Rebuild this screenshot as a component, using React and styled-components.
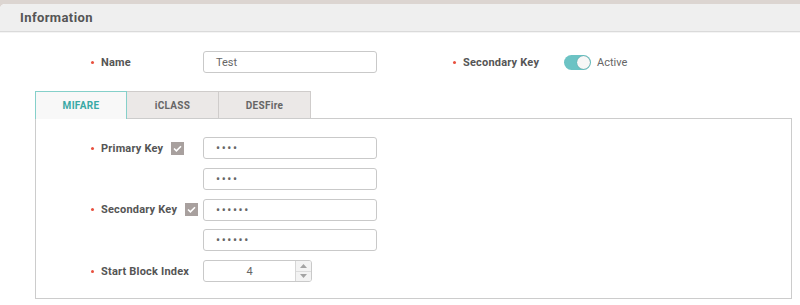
import React, { useState } from 'react';
import styled, { createGlobalStyle } from 'styled-components';

const GlobalStyle = createGlobalStyle`
  body {
    margin: 0;
    background: #dcd5d1;
    font-family: Roboto, "Liberation Sans", sans-serif;
  }
`;

const Page = styled.div`
  padding-top: 4px;
  width: 800px;
  height: 305px;
  box-sizing: border-box;
`;

const Card = styled.section`
  background: #fff;
  border-top-left-radius: 5px;
  height: 301px;
  overflow: hidden;
`;

const Header = styled.div`
  height: 27px;
  background: #efefef;
  border-bottom: 1px solid #dadada;
  box-shadow: 0 1px 0 #f4f4f4;
  padding-left: 20px;
  display: flex;
  align-items: center;
  font-size: 13px;
  font-weight: 700;
  letter-spacing: 0.4px;
  color: #555;
`;

const Body = styled.div`
  padding: 19px 8px 0 35px;
`;

const TopRow = styled.div`
  display: flex;
  align-items: center;
  height: 22px;
  padding-left: 56px;
`;

const Label = styled.div`
  display: flex;
  align-items: center;
  width: ${p => (p.$w ? `${p.$w}px` : '112px')};
  flex-shrink: 0;
  font-size: 11px;
  font-weight: 700;
  letter-spacing: 0.2px;
  color: #555;
  &::before {
    content: '';
    width: 3px;
    height: 3px;
    border-radius: 50%;
    background: #e8503e;
    margin-right: 7px;
  }
`;

const Input = styled.div`
  width: 174px;
  height: 22px;
  box-sizing: border-box;
  border: 1px solid #c9c9c9;
  border-radius: 3px;
  background: #fff;
  display: flex;
  align-items: center;
  padding-left: 12px;
  font-size: ${p => (p.$secret ? '12px' : '11px')};
  color: #666;
  letter-spacing: ${p => (p.$secret ? '1.6px' : '0')};
  flex-shrink: 0;
`;

const Gap = styled.div`
  width: 76px;
`;

const Toggle = styled.div`
  width: 27px;
  height: 15px;
  border-radius: 8px;
  background: ${p => (p.$on ? '#6cc3c4' : '#ccc')};
  position: relative;
  flex-shrink: 0;
  cursor: pointer;
  &::after {
    content: '';
    position: absolute;
    top: 1px;
    left: ${p => (p.$on ? '13px' : '1px')};
    width: 13px;
    height: 13px;
    border-radius: 50%;
    background: #f7f7f7;
    box-shadow: 0 0 1px rgba(0, 0, 0, 0.35);
  }
`;

const ToggleText = styled.span`
  margin-left: 6px;
  font-size: 11px;
  color: #666;
`;

const Tabs = styled.div`
  display: flex;
  margin-top: 18px;
  height: 27px;
`;

const Tab = styled.div`
  width: 92px;
  box-sizing: border-box;
  display: flex;
  align-items: center;
  justify-content: center;
  font-size: 10px;
  font-weight: 700;
  letter-spacing: 0.3px;
  color: ${p => (p.$active ? '#3aa9a6' : '#666')};
  background: ${p => (p.$active ? '#f8f8f8' : '#ebe8e7')};
  border: 1px solid ${p => (p.$active ? '#85d0ca' : '#cfcccb')};
  border-bottom: none;
  border-left-width: ${p => (p.$first ? '1px' : '0')};
  margin-bottom: ${p => (p.$active ? '-1px' : '0')};
  position: relative;
  z-index: ${p => (p.$active ? 1 : 0)};
  cursor: pointer;
`;

const Panel = styled.div`
  border: 1px solid #cccccc;
  height: 181px;
  box-sizing: border-box;
  padding: 18px 0 0 55px;
  display: flex;
  flex-direction: column;
  gap: 8.75px;
`;

const Row = styled.div`
  display: flex;
  align-items: center;
  height: 22px;
`;

const LabelCell = styled.div`
  width: 112px;
  flex-shrink: 0;
  display: flex;
  align-items: center;
`;

const Check = styled.span`
  width: 13px;
  height: 13px;
  background: #a8a09e;
  display: inline-flex;
  align-items: center;
  justify-content: center;
  margin-left: 8px;
`;

const Spin = styled.div`
  width: 109px;
  height: 22px;
  box-sizing: border-box;
  border: 1px solid #c9c9c9;
  border-radius: 3px;
  display: flex;
  overflow: hidden;
`;

const SpinValue = styled.div`
  flex: 1;
  display: flex;
  align-items: center;
  justify-content: center;
  font-size: 11px;
  color: #666;
`;

const SpinButtons = styled.div`
  width: 15px;
  border-left: 1px solid #d6d6d6;
  display: flex;
  flex-direction: column;
`;

const SpinButton = styled.div`
  flex: 1;
  display: flex;
  align-items: center;
  justify-content: center;
  background: #f3f3f3;
  & + & {
    border-top: 1px solid #dcdcdc;
  }
`;

const Tick = () => (
  <svg width="9" height="7" viewBox="0 0 9 7">
    <path d="M1 3.5 L3.4 5.8 L8 1.2" fill="none" stroke="#fff" strokeWidth="1.6" />
  </svg>
);

const Arrow = ({ up }) => (
  <svg width="7" height="4" viewBox="0 0 7 4">
    <path d={up ? 'M0 4 L3.5 0 L7 4 Z' : 'M0 0 L3.5 4 L7 0 Z'} fill="#a3a3a3" />
  </svg>
);

const App = () => {
  const [tab, setTab] = useState('MIFARE');
  const tabs = ['MIFARE', 'iCLASS', 'DESFire'];

  return (
    <>
      <GlobalStyle />
      <Page>
        <Card>
          <Header>Information</Header>
          <Body>
            <TopRow>
              <Label>Name</Label>
              <Input>Test</Input>
              <Gap />
              <Label $w={111}>Secondary Key</Label>
              <Toggle $on />
              <ToggleText>Active</ToggleText>
            </TopRow>

            <Tabs>
              {tabs.map((t, i) => (
                <Tab key={t} $first={i === 0} $active={tab === t} onClick={() => setTab(t)}>
                  {t}
                </Tab>
              ))}
            </Tabs>
            <Panel>
              <Row>
                <LabelCell>
                  <Label $w="auto">Primary Key</Label>
                  <Check><Tick /></Check>
                </LabelCell>
                <Input $secret>••••</Input>
              </Row>
              <Row>
                <LabelCell />
                <Input $secret>••••</Input>
              </Row>
              <Row>
                <LabelCell>
                  <Label $w="auto">Secondary Key</Label>
                  <Check><Tick /></Check>
                </LabelCell>
                <Input $secret>••••••</Input>
              </Row>
              <Row>
                <LabelCell />
                <Input $secret>••••••</Input>
              </Row>
              <Row>
                <LabelCell>
                  <Label $w="auto">Start Block Index</Label>
                </LabelCell>
                <Spin>
                  <SpinValue>4</SpinValue>
                  <SpinButtons>
                    <SpinButton><Arrow up /></SpinButton>
                    <SpinButton><Arrow /></SpinButton>
                  </SpinButtons>
                </Spin>
              </Row>
            </Panel>
          </Body>
        </Card>
      </Page>
    </>
  );
};

export default App;
